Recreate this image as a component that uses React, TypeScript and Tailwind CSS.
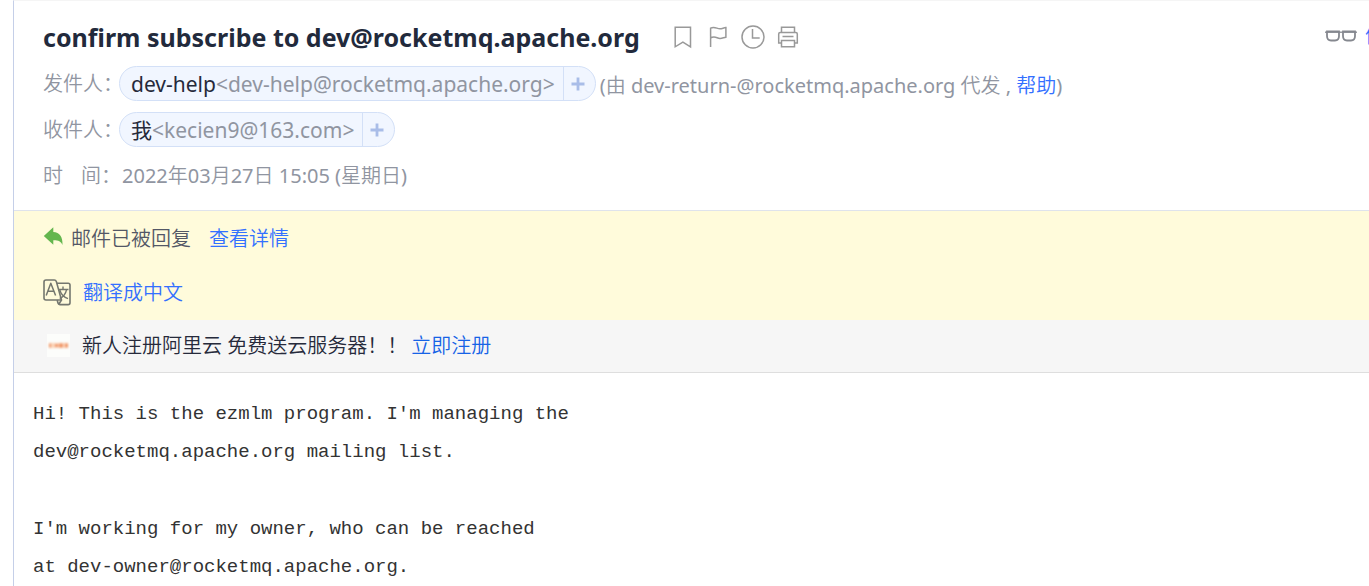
import type { ReactNode } from "react";

const iconProps = {
  fill: "none",
  stroke: "currentColor",
  strokeWidth: 1.5,
  "aria-hidden": true,
} as const;

function BookmarkIcon() {
  return (
    <svg {...iconProps} className="h-6 w-6" viewBox="0 0 24 24">
      <path d="M4.2 2.2h15.3v19.6l-7.6-4.6-7.7 4.6z" />
    </svg>
  );
}

function FlagIcon() {
  return (
    <svg {...iconProps} className="h-6 w-6" viewBox="0 0 24 24">
      <path d="M4.600 22V3.200c4-2.200 6.500.8 9.500.6 2-.1 3.400-.9 5.800-1.200v9.600c-2.600.5-3.800 1.300-6 1.200-3-.2-5.300-2.800-9.300-.4" />
    </svg>
  );
}

function ClockIcon() {
  return (
    <svg {...iconProps} className="h-6 w-6" viewBox="0 0 24 24">
      <circle cx="12" cy="12" r="11" />
      <path d="M11.500 4v9h7.200" />
    </svg>
  );
}

function PrinterIcon() {
  return (
    <svg {...iconProps} className="h-6 w-6" viewBox="0 0 24 24">
      <path d="M5.500 7.500V2.200h13v5.300M5.500 18H2.700V9c0-.9.6-1.500 1.500-1.500h15.600c.9 0 1.500.6 1.500 1.500v9h-2.800M6.500 11.400h11" />
      <path d="M5.500 15.500h13v6.300h-13z" />
    </svg>
  );
}

function GlassesIcon() {
  return (
    <svg
      className="h-3 w-8 shrink-0 text-[#85888f]"
      viewBox="0 0 32 12"
      fill="none"
      stroke="currentColor"
      strokeWidth="1.8"
      aria-hidden
    >
      <path d="M0 2.200h32" strokeWidth="1.300" />
      <path d="M2 1.500h12v4.500c0 3-1.500 4.500-4 4.500H6c-2.500 0-4-1.500-4-4.500zM18 1.500h12v4.500c0 3-1.500 4.500-4 4.500h-4c-2.500 0-4-1.500-4-4.500z" />
    </svg>
  );
}

function ReplyIcon() {
  return (
    <svg className="mb-1 h-5 w-5" viewBox="0 0 20 20" fill="#64b64e" aria-hidden>
      <path d="M.8 9 10.300.2v4.800c6.200.3 9.500 4.400 9.200 13-1.500-3.600-4.200-4.900-9.200-4.800v4.500z" />
    </svg>
  );
}

function TranslateIcon() {
  return (
    <svg
      className="h-7 w-7"
      viewBox="0 0 28 28"
      fill="none"
      stroke="#74776f"
      strokeWidth="1.600"
      strokeLinejoin="round"
      aria-hidden
    >
      <path d="M3 1h8.300c1 0 1.700.5 2 1.400l5.200 18.600H3c-1.300 0-2-.7-2-2V3c0-1.300.7-2 2-2z" />
      <path d="M13.800 4.200h11.400c1.200 0 1.800.6 1.800 1.800v17.800c0 1.200-.6 1.800-1.800 1.800h-8.400c-1 0-1.600-.5-1.800-1.400l-.8-3.200M18.500 21l-2.600 4" />
      <path d="m3.200 16.500 4.600-12.200 4.800 12.200M5 12.300h5.800" strokeWidth="1.500" />
      <path d="M15 10.500h10.500M20 7.500v3M23.500 10.800c-.9 4.200-3.200 7-6.800 8.700M16.800 11.200c1.500 4.300 4 7 8.200 8.500" strokeWidth="1.400" />
    </svg>
  );
}

function SponsorIcon() {
  return (
    <svg className="h-6 w-6" viewBox="0 0 24 24" aria-hidden>
      <defs>
        <filter id="soft" x="-20%" y="-50%" width="140%" height="200%">
          <feGaussianBlur stdDeviation="0.9" />
        </filter>
      </defs>
      <rect x="1" y="0" width="23" height="23" fill="#fcfdfb" />
      <g filter="url(#soft)">
        <rect x="3" y="9" width="19" height="5" fill="#fbd5b9" />
        <path d="M3 9.500h2v4H3zM9 10h3v3H9zM13 9.500h4v4h-4zM19 9.500h3v4h-3z" fill="#f09462" />
      </g>
    </svg>
  );
}

function IconButton({ label, children }: { label: string; children: ReactNode }) {
  return (
    <button type="button" aria-label={label} className="text-[#999]">
      {children}
    </button>
  );
}

function Contact({ name, email }: { name: string; email: string }) {
  return (
    <span className="flex h-[35px] items-stretch rounded-full border border-[#d3e0f7] bg-[#f1f6ff]">
      <span className="flex items-center pr-2 pl-[11px] text-[21px] text-[#262a3b]">
        {name}
        <span className="text-[#9095a1]">&lt;{email}&gt;</span>
      </span>
      <button
        type="button"
        aria-label={`添加 ${email}`}
        className="flex w-8 items-center border-l border-[#d3e0f7] pl-[7px]"
      >
        <svg className="h-3.5 w-3.5" viewBox="0 0 14 14" stroke="#a9bde8" strokeWidth="2.800" aria-hidden>
          <path d="M7 .5v13M.5 7h13" />
        </svg>
      </button>
    </span>
  );
}

export default function App() {
  return (
    <main className="ml-[13px] h-screen overflow-hidden border-t border-l border-t-[#f5f5f5] border-l-[#c5cfe8] bg-white font-['Noto_Sans','Noto_Sans_CJK_SC',sans-serif] text-[20px] leading-7 font-[350]">
      <header className="pb-[18px] pl-[29px]">
        <div className="flex h-[65px] items-center pt-1.5">
          <h1 className="text-[25px] leading-8 font-bold whitespace-nowrap text-[#222a3c]">
            confirm subscribe to dev@rocketmq.apache.org
          </h1>
          <div className="ml-[31px] flex shrink-0 gap-[11px]">
            <IconButton label="书签"><BookmarkIcon /></IconButton>
            <IconButton label="标记"><FlagIcon /></IconButton>
            <IconButton label="稍后处理"><ClockIcon /></IconButton>
            <IconButton label="打印"><PrinterIcon /></IconButton>
          </div>
          <button type="button" className="ml-auto flex w-11 shrink-0 items-center gap-2 overflow-hidden pb-0.5 text-[#3370ff]">
            <GlassesIcon />
            <span>体</span>
          </button>
        </div>
        <dl className="text-[#9095a1]">
          <div className="flex h-[46px] items-start whitespace-nowrap">
            <dt className="w-[76px] pt-1">发件人：</dt>
            <dd className="flex font-normal">
              <Contact name="dev-help" email="dev-help@rocketmq.apache.org" />
              <span className="ml-1 pt-1.5">
                (<span className="font-[350]">由</span> dev-return-@rocketmq.apache.org <span className="font-[350]">代发</span> , <a href="#help" className="font-[350] text-[#3370ff]">帮助</a>)
              </span>
            </dd>
          </div>
          <div className="flex h-[46px] items-start whitespace-nowrap">
            <dt className="w-[76px] pt-1">收件人：</dt>
            <dd className="flex font-normal"><Contact name="我" email="kecien9@163.com" /></dd>
          </div>
          <div className="flex h-9 items-center whitespace-nowrap">
            <dt className="flex w-[79px] gap-[18px]"><span>时</span><span>间：</span></dt>
            <dd className="font-normal">
              2022<span className="font-[350]">年</span>03<span className="font-[350]">月</span>27<span className="font-[350]">日</span> 15:05 (<span className="font-[350]">星期日</span>)
            </dd>
          </div>
        </dl>
      </header>

      <section className="-mt-0.5 border-t border-[#dfe3ec] bg-[#fffbdb] pl-[29px]">
        <div className="flex h-[55px] items-center">
          <ReplyIcon />
          <span className="ml-2 text-[#535766]">邮件已被回复</span>
          <a href="#detail" className="ml-[18px] text-[#3370ff]">查看详情</a>
        </div>
        <div className="flex h-[54px] items-center">
          <TranslateIcon />
          <button type="button" className="ml-3 text-[#3370ff]">翻译成中文</button>
        </div>
      </section>

      <aside className="flex h-[53px] items-center border-b border-[#dedede] bg-[#f6f6f6] pl-8">
        <SponsorIcon />
        <span className="ml-3 text-[#262a3b]">新人注册阿里云 免费送云服务器！！</span>
        <a href="#register" className="ml-1 text-[#1663e6]">立即注册</a>
      </aside>

      <article className="pt-[22px] pl-[19px] font-['Liberation_Mono',monospace] text-[19px] leading-[38px] font-normal text-[#333]">
        <p>
          Hi! This is the ezmlm program. I'm managing the
          <br />
          dev@rocketmq.apache.org mailing list.
        </p>
        <p className="pt-[39px]">
          I'm working for my owner, who can be reached
          <br />
          at dev-owner@rocketmq.apache.org.
        </p>
      </article>
    </main>
  );
}
